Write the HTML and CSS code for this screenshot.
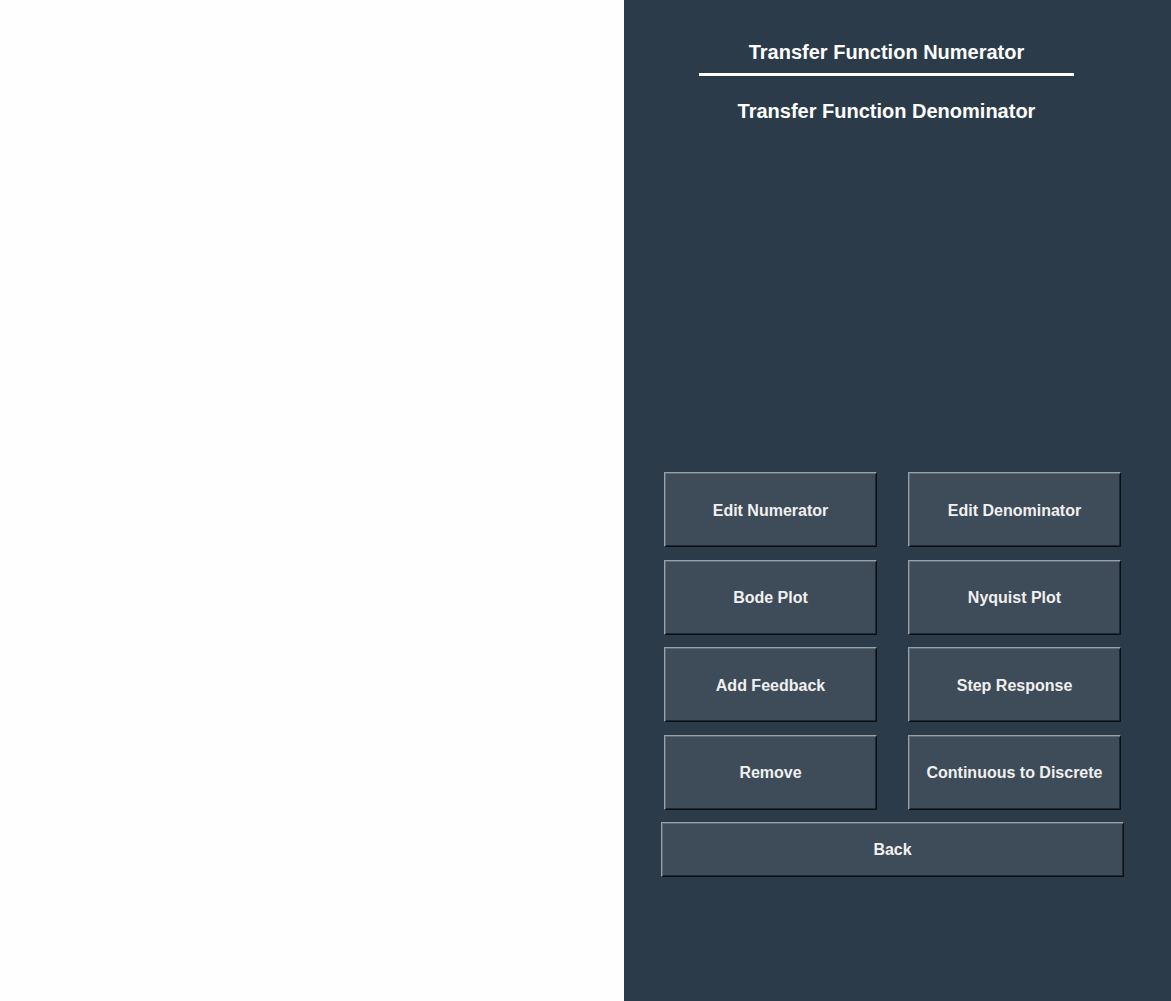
FILE: index.html
```html
<!DOCTYPE html>
<html>
<head>
<meta charset="utf-8">
<link rel="stylesheet" href="styles.css">
</head>
<body>
<div class="app">
  <div class="canvas"></div>
  <div class="panel">
    <div class="header">
      <div class="title">Transfer Function Numerator</div>
      <div class="rule"></div>
      <div class="title title-den">Transfer Function Denominator</div>
    </div>
    <div class="grid">
      <button class="btn">Edit Numerator</button>
      <button class="btn">Edit Denominator</button>
      <button class="btn">Bode Plot</button>
      <button class="btn">Nyquist Plot</button>
      <button class="btn">Add Feedback</button>
      <button class="btn">Step Response</button>
      <button class="btn">Remove</button>
      <button class="btn">Continuous to Discrete</button>
    </div>
    <button class="btn btn-back">Back</button>
  </div>
</div>
</body>
</html>
```

FILE: styles.css
```css
html, body {
  margin: 0;
  padding: 0;
  height: 100%;
}
body {
  font-family: "Liberation Sans", Arial, sans-serif;
  background: #fefefe;
}
.app {
  display: flex;
  height: 1001px;
}
.canvas {
  width: 624px;
  background: #fefefe;
}
.panel {
  flex: 1;
  background: #2b3b4a;
  display: flex;
  flex-direction: column;
  padding-top: 41px;
  box-sizing: border-box;
}
.header {
  margin-left: 75px;
  width: 375px;
  display: flex;
  flex-direction: column;
  align-items: center;
}
.title {
  color: #ffffff;
  font-weight: bold;
  font-size: 20px;
  line-height: 23px;
  height: 23px;
  white-space: nowrap;
}
.rule {
  width: 375px;
  height: 3px;
  margin-top: 9px;
  background: #ffffff;
}
.title-den {
  margin-top: 24px;
}
.grid {
  margin-top: 349px;
  margin-left: 40px;
  display: grid;
  grid-template-columns: 213px 213px;
  grid-auto-rows: 75px;
  column-gap: 31px;
  row-gap: 12.5px;
  width: 457px;
}
.btn {
  font-family: "Liberation Sans", Arial, sans-serif;
  font-weight: bold;
  font-size: 16px;
  color: #f0f0f0;
  background: #3e4b59;
  border: 1px solid;
  border-color: #9aa1a8 #0b0f13 #0b0f13 #9aa1a8;
  box-shadow: inset 1px 1px 0 #5f6a75, inset -1px -1px 0 #1f2830;
  padding: 2px 0 0 0;
  margin: 0;
  box-sizing: border-box;
  cursor: pointer;
}
.btn-back {
  margin-top: 12px;
  margin-left: 37px;
  width: 463px;
  height: 55px;
}
```
